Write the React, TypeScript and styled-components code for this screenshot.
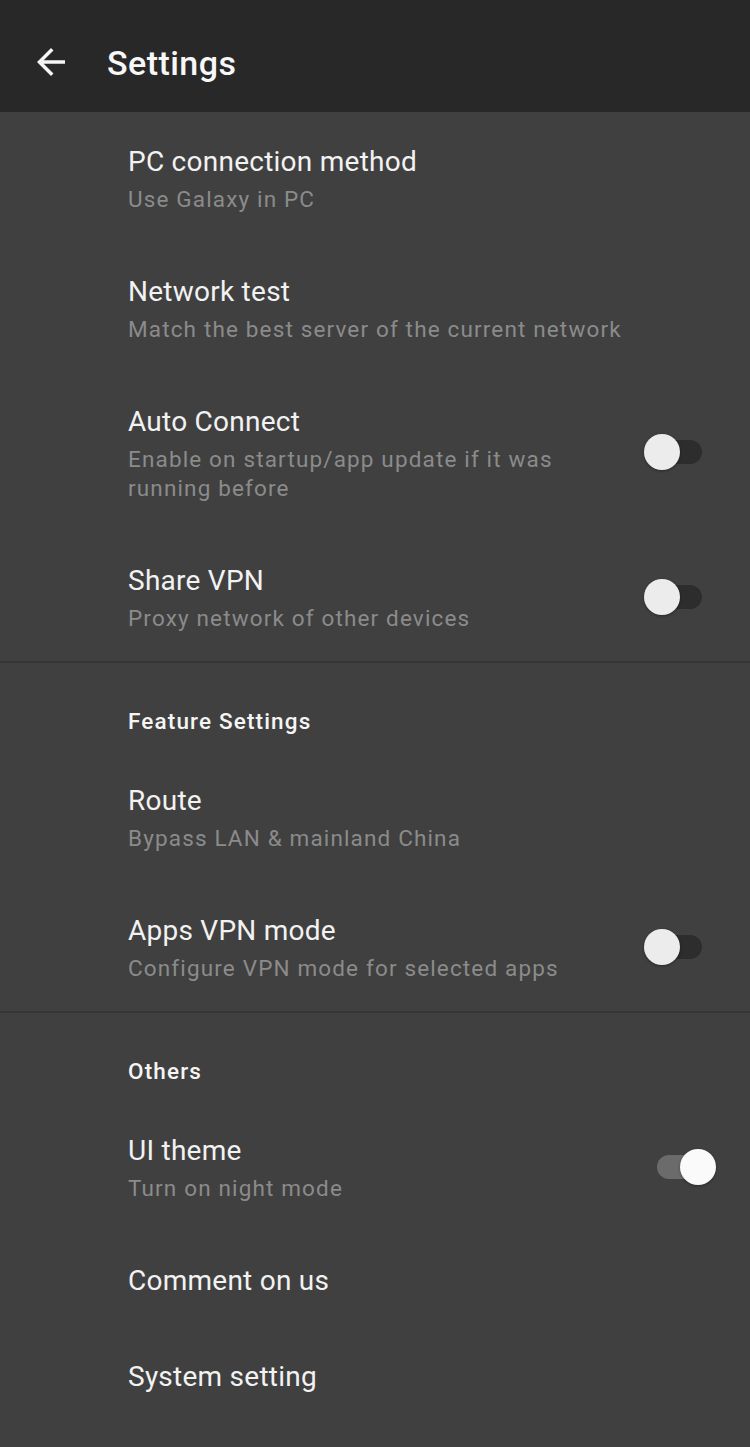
import React from "react";
import styled, { createGlobalStyle } from "styled-components";

const GlobalStyle = createGlobalStyle`
  html, body {
    margin: 0;
    padding: 0;
    background: #404040;
  }
  body {
    font-family: Roboto, "Noto Sans", "Liberation Sans", sans-serif;
    -webkit-font-smoothing: antialiased;
  }
  * { box-sizing: border-box; }
`;

const Page = styled.div`
  width: 750px;
  min-height: 1447px;
  background: #404040;
  display: flex;
  flex-direction: column;
`;

const TopBar = styled.header`
  height: 112px;
  background: #282828;
  display: flex;
  align-items: center;
  padding-left: 30px;
  padding-top: 13px;
  gap: 35px;
`;

const BackButton = styled.button`
  width: 42px;
  height: 42px;
  padding: 0;
  border: none;
  background: transparent;
  color: #f5f5f5;
  display: flex;
  align-items: center;
  justify-content: center;
  margin-top: -2px;
  svg { display: block; }
`;

const TopTitle = styled.h1`
  margin: 0;
  font-size: 34px;
  font-weight: 500;
  color: #f7f7f7;
  letter-spacing: 0.45px;
`;

const Group = styled.section<{ $divider?: boolean }>`
  display: flex;
  flex-direction: column;
  border-bottom: ${(p) => (p.$divider ? "2px solid #363636" : "none")};
`;

const SectionHeader = styled.div`
  padding: 44px 34px 16px 128px;
  font-size: 22.5px;
  line-height: 28px;
  font-weight: 500;
  letter-spacing: 1.15px;
  color: #f5f5f5;
`;

const Row = styled.div<{ $single?: boolean }>`
  display: flex;
  align-items: center;
  padding: 33px 34px ${(p) => (p.$single ? "29px" : "28px")} 128px;
`;

const TextCol = styled.div<{ $withSwitch?: boolean }>`
  flex: 1;
  min-width: 0;
  display: flex;
  flex-direction: column;
  padding-right: ${(p) => (p.$withSwitch ? "30px" : "0")};
`;

const Title = styled.div`
  font-size: 28px;
  line-height: 34px;
  letter-spacing: 0.25px;
  color: #f2f2f2;
  font-weight: 400;
`;

const Subtitle = styled.div`
  margin-top: 6px;
  font-size: 22.5px;
  line-height: 29px;
  letter-spacing: 1.15px;
  color: #8b8b8b;
  font-weight: 400;
`;

const SwitchBox = styled.div`
  position: relative;
  width: 72px;
  height: 36px;
  flex-shrink: 0;
  margin-top: -4px;
`;

const Track = styled.div<{ $on: boolean }>`
  position: absolute;
  left: 13px;
  top: 6px;
  width: 45px;
  height: 24px;
  border-radius: 12px;
  background: ${(p) => (p.$on ? "#6b6b6b" : "#2d2d2d")};
`;

const Thumb = styled.div<{ $on: boolean }>`
  position: absolute;
  top: 0;
  left: ${(p) => (p.$on ? "36px" : "0")};
  width: 36px;
  height: 36px;
  border-radius: 50%;
  background: ${(p) => (p.$on ? "#fafafa" : "#ececec")};
  box-shadow: 0 1px 3px rgba(0, 0, 0, 0.35);
`;

const Switch = ({ on }: { on: boolean }) => (
  <SwitchBox>
    <Track $on={on} />
    <Thumb $on={on} />
  </SwitchBox>
);

type Item = {
  title: string;
  subtitle?: string;
  toggle?: boolean;
};

const SettingRow = ({ title, subtitle, toggle }: Item) => (
  <Row $single={!subtitle}>
    <TextCol $withSwitch={toggle !== undefined}>
      <Title>{title}</Title>
      {subtitle && <Subtitle>{subtitle}</Subtitle>}
    </TextCol>
    {toggle !== undefined && <Switch on={toggle} />}
  </Row>
);

const general: Item[] = [
  { title: "PC connection method", subtitle: "Use Galaxy in PC" },
  { title: "Network test", subtitle: "Match the best server of the current network" },
  {
    title: "Auto Connect",
    subtitle: "Enable on startup/app update if it was running before",
    toggle: false,
  },
  { title: "Share VPN", subtitle: "Proxy network of other devices", toggle: false },
];

const feature: Item[] = [
  { title: "Route", subtitle: "Bypass LAN & mainland China" },
  { title: "Apps VPN mode", subtitle: "Configure VPN mode for selected apps", toggle: false },
];

const others: Item[] = [
  { title: "UI theme", subtitle: "Turn on night mode", toggle: true },
  { title: "Comment on us" },
  { title: "System setting" },
];

export default function App() {
  return (
    <>
      <GlobalStyle />
      <Page>
        <TopBar>
          <BackButton aria-label="Back">
            <svg width="42" height="42" viewBox="0 0 24 24" fill="currentColor">
              <path d="M20 11H7.83l5.59-5.59L12 4l-8 8 8 8 1.41-1.41L7.83 13H20v-2z" />
            </svg>
          </BackButton>
          <TopTitle>Settings</TopTitle>
        </TopBar>
        <Group $divider>
          {general.map((it) => (
            <SettingRow key={it.title} {...it} />
          ))}
        </Group>
        <Group $divider>
          <SectionHeader>Feature Settings</SectionHeader>
          {feature.map((it) => (
            <SettingRow key={it.title} {...it} />
          ))}
        </Group>
        <Group>
          <SectionHeader>Others</SectionHeader>
          {others.map((it) => (
            <SettingRow key={it.title} {...it} />
          ))}
        </Group>
      </Page>
    </>
  );
}
